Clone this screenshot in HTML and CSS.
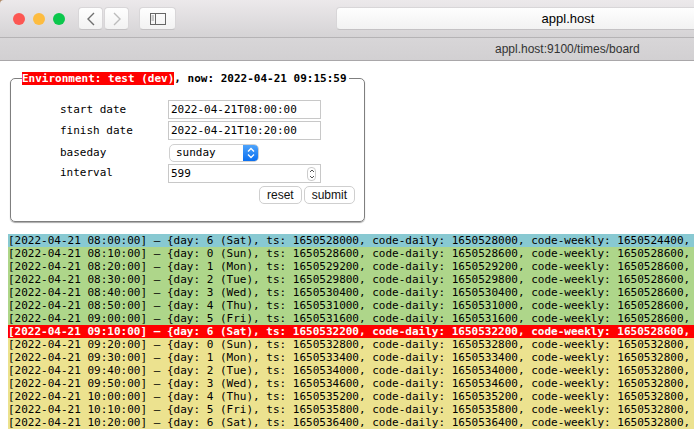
FILE: index.html
```html
<!DOCTYPE html>
<html>
<head>
	<title>appl.host</title>
	<link rel="stylesheet" href="styles.css">
</head>
<body>
	<div class="toolbar">
		<div class="lights">
			<span class="light red"></span>
			<span class="light yellow"></span>
			<span class="light green"></span>
		</div>
		<div class="nav">
			<span class="tool-btn nav-btn">
				<svg width="10" height="16" viewBox="0 0 10 16"><path d="M8 2 L2 8 L8 14" fill="none" stroke="#6f6f6f" stroke-width="1.4"/></svg>
			</span>
			<span class="tool-btn nav-btn">
				<svg width="10" height="16" viewBox="0 0 10 16"><path d="M2 2 L8 8 L2 14" fill="none" stroke="#bcbcbc" stroke-width="1.4"/></svg>
			</span>
		</div>
		<span class="tool-btn side-btn">
			<svg width="16" height="12" viewBox="0 0 16 12"><rect x="0.5" y="0.5" width="15" height="11" fill="none" stroke="#666"/><path d="M5.5 0.5 V11.5" stroke="#666"/><path d="M1.5 3 H4 M1.5 5 H4 M1.5 7 H4" stroke="#999"/></svg>
		</span>
		<div class="address">appl.host</div>
	</div>
	<div class="tabbar">appl.host:9100/times/board</div>

	<div class="page">
		<form class="board-form" onsubmit="return false;">
			<fieldset>
				<legend><span class="env">Environment: test (dev)</span>, now: 2022-04-21 09:15:59</legend>
				<div class="fields">
					<label for="start">start date</label>
					<input type="text" id="start" value="2022-04-21T08:00:00">
					<label for="finish">finish date</label>
					<input type="text" id="finish" value="2022-04-21T10:20:00">
					<label class="label-low" for="baseday">baseday</label>
					<div class="select" id="baseday">
						<span class="select-value">sunday</span>
						<span class="select-arrows">
							<svg width="8" height="12" viewBox="0 0 8 12"><path d="M1 4.5 L4 1.5 L7 4.5 M1 7.5 L4 10.5 L7 7.5" fill="none" stroke="#fff" stroke-width="1.3"/></svg>
						</span>
					</div>
					<label class="label-high" for="interval">interval</label>
					<div class="number">
						<span>599</span>
						<span class="spinner">
							<svg width="6" height="12" viewBox="0 0 6 12"><path d="M1 4 L3 2 L5 4 M1 8 L3 10 L5 8" fill="none" stroke="#555"/></svg>
						</span>
					</div>
				</div>
				<div class="buttons">
					<button type="reset">reset</button>
					<button type="submit">submit</button>
				</div>
			</fieldset>
		</form>

		<div class="log">
			<div class="row first">[2022-04-21 08:00:00] – {day: 6 (Sat), ts: 1650528000, code-daily: 1650528000, code-weekly: 1650524400,</div>
			<div class="row before">[2022-04-21 08:10:00] – {day: 0 (Sun), ts: 1650528600, code-daily: 1650528600, code-weekly: 1650528600,</div>
			<div class="row before">[2022-04-21 08:20:00] – {day: 1 (Mon), ts: 1650529200, code-daily: 1650529200, code-weekly: 1650528600,</div>
			<div class="row before">[2022-04-21 08:30:00] – {day: 2 (Tue), ts: 1650529800, code-daily: 1650529800, code-weekly: 1650528600,</div>
			<div class="row before">[2022-04-21 08:40:00] – {day: 3 (Wed), ts: 1650530400, code-daily: 1650530400, code-weekly: 1650528600,</div>
			<div class="row before">[2022-04-21 08:50:00] – {day: 4 (Thu), ts: 1650531000, code-daily: 1650531000, code-weekly: 1650528600,</div>
			<div class="row before">[2022-04-21 09:00:00] – {day: 5 (Fri), ts: 1650531600, code-daily: 1650531600, code-weekly: 1650528600,</div>
			<div class="row current">[2022-04-21 09:10:00] – {day: 6 (Sat), ts: 1650532200, code-daily: 1650532200, code-weekly: 1650528600,</div>
			<div class="row after">[2022-04-21 09:20:00] – {day: 0 (Sun), ts: 1650532800, code-daily: 1650532800, code-weekly: 1650532800,</div>
			<div class="row after">[2022-04-21 09:30:00] – {day: 1 (Mon), ts: 1650533400, code-daily: 1650533400, code-weekly: 1650532800,</div>
			<div class="row after">[2022-04-21 09:40:00] – {day: 2 (Tue), ts: 1650534000, code-daily: 1650534000, code-weekly: 1650532800,</div>
			<div class="row after">[2022-04-21 09:50:00] – {day: 3 (Wed), ts: 1650534600, code-daily: 1650534600, code-weekly: 1650532800,</div>
			<div class="row after">[2022-04-21 10:00:00] – {day: 4 (Thu), ts: 1650535200, code-daily: 1650535200, code-weekly: 1650532800,</div>
			<div class="row after">[2022-04-21 10:10:00] – {day: 5 (Fri), ts: 1650535800, code-daily: 1650535800, code-weekly: 1650532800,</div>
			<div class="row after">[2022-04-21 10:20:00] – {day: 6 (Sat), ts: 1650536400, code-daily: 1650536400, code-weekly: 1650532800,</div>
		</div>
	</div>
</body>
</html>
```

FILE: styles.css
```css
* {
	box-sizing: border-box;
	margin: 0;
	padding: 0;
}

html, body {
	height: 100%;
	overflow: hidden;
}

body {
	display: flex;
	flex-direction: column;
	background-color: #b08a68;
	font-family: 'DejaVu Sans Mono', 'Liberation Mono', monospace;
	font-size: 11px;
	color: #000;
}

.toolbar {
	height: 38px;
	flex-shrink: 0;
	display: flex;
	align-items: center;
	padding-left: 13px;
	overflow: hidden;
	background: linear-gradient(#ece9eb, #d5d3d5);
	border-bottom: 1px solid #b5b3b5;
	border-top-left-radius: 4px;
}

.toolbar > * {
	flex-shrink: 0;
}

.lights {
	display: flex;
	gap: 8px;
	margin-right: 13px;
}

.light {
	width: 12px;
	height: 12px;
	border-radius: 50%;
}

.light.red { background-color: #fc5753; }
.light.yellow { background-color: #fdbc40; }
.light.green { background-color: #0bc74c; }

.nav {
	display: flex;
	gap: 1px;
	margin-right: 10px;
}

.tool-btn {
	height: 23px;
	display: flex;
	align-items: center;
	justify-content: center;
	background: linear-gradient(#fefefe, #f2f2f2);
	border: 1px solid #d8d6d8;
	border-bottom-color: #c4c2c4;
	border-radius: 4px;
}

.nav-btn { width: 25px; }
.side-btn { width: 37px; }

.address {
	width: 464px;
	height: 23px;
	margin-left: 160px;
	line-height: 21px;
	text-align: center;
	font-family: 'Liberation Sans', Arial, sans-serif;
	font-size: 13px;
	background: linear-gradient(#fefefe, #f2f2f2);
	border: 1px solid #d8d6d8;
	border-bottom-color: #c4c2c4;
	border-radius: 4px;
}

.tabbar {
	height: 23px;
	flex-shrink: 0;
	line-height: 22px;
	padding-left: 495px;
	font-family: 'Liberation Sans', Arial, sans-serif;
	font-size: 12px;
	color: #333;
	background: linear-gradient(#d8d6d8, #d2d0d2);
	border-bottom: 1px solid #a9a7a9;
}

.page {
	flex: 1;
	background-color: #fff;
}

.board-form {
	padding: 11px 329px 0 10px;
}

fieldset {
	height: 150px;
	border: 1px solid #7f7f7f;
	border-radius: 5px;
	padding: 0 9px 0 11px;
	box-shadow: 0 1px 1px #aaa;
}

legend {
	font-weight: bold;
	line-height: 13px;
	padding-right: 2px;
}

.env {
	background-color: #f00;
	color: #fff;
}

.fields {
	display: grid;
	grid-template-columns: 108px 153px;
	grid-template-rows: 19px 19px 20px 19px;
	row-gap: 2px;
	align-items: center;
	padding: 15px 0 0 38px;
}

label {
	padding-bottom: 1px;
}

.label-low {
	padding-bottom: 0;
}

.label-high {
	padding-bottom: 3px;
}

input[type="text"], .number {
	height: 19px;
	width: 153px;
	border: 1px solid #c8c8c8;
	padding: 0 2px;
	font: inherit;
	color: #000;
	background-color: #fff;
	outline: none;
}

.number {
	display: flex;
	align-items: center;
	justify-content: space-between;
}

.spinner {
	width: 9px;
	height: 14px;
	margin-right: 2px;
	display: flex;
	align-items: center;
	justify-content: center;
	border: 1px solid #ccc;
	border-radius: 4px;
}

.select {
	width: 90px;
	height: 18px;
	margin-left: 1px;
	align-self: end;
	display: flex;
	justify-content: space-between;
	background-color: #fff;
	border: 1px solid #d0d0d0;
	border-radius: 5px;
	overflow: hidden;
}

.select-value {
	padding-left: 6px;
	line-height: 16px;
}

.select-arrows {
	width: 15px;
	display: flex;
	align-items: center;
	justify-content: center;
	background: linear-gradient(#4da3fb, #0a6ff0);
}

.buttons {
	display: flex;
	justify-content: flex-end;
	gap: 2px;
	margin-top: 3px;
}

button {
	height: 18px;
	padding: 0 7px;
	font-family: 'Liberation Sans', Arial, sans-serif;
	font-size: 12px;
	color: #111;
	background-color: #fff;
	border: 1px solid #cfcfcf;
	border-radius: 5px;
}

.log {
	margin: 12px 0 0 8px;
	white-space: nowrap;
}

.row {
	height: 13px;
	line-height: 13px;
	width: 686px;
	overflow: hidden;
}

.first { background-color: #88c9d2; }
.before { background-color: #aed68a; }
.after { background-color: #ece28f; }

.current {
	background-color: #f00;
	color: #fff;
	font-weight: bold;
}
```
